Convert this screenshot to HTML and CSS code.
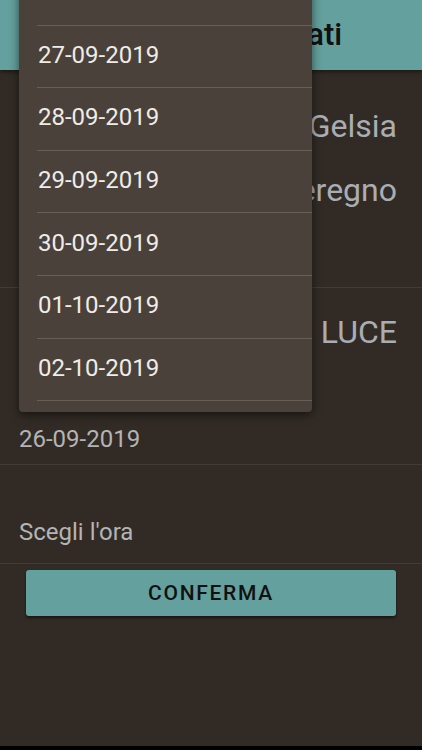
FILE: index.html
```html
<!DOCTYPE html>
<html lang="it">
<head>
    <meta charset="UTF-8">
    <meta name="viewport" content="width=device-width, initial-scale=1.0">
    <title>Riepilogo dati</title>
    <link rel="stylesheet" href="styles.css">
</head>
<body>
    <div class="screen">
        <header class="toolbar">
            <h1>Riepilogo dati</h1>
        </header>

        <!-- Dati della prenotazione -->
        <section class="info">
            <p class="info-value">Sportello Gelsia</p>
            <p class="info-value">Seregno</p>
        </section>
        <section class="service">
            <p class="info-value">Servizio LUCE</p>
        </section>

        <div class="field field-date">26-09-2019</div>
        <div class="field field-time">Scegli l'ora</div>

        <button type="button" class="confirm">CONFERMA</button>

        <!-- Menu a tendina delle date, aperto -->
        <div class="dropdown">
            <ul>
                <li>26-09-2019</li>
                <li>27-09-2019</li>
                <li>28-09-2019</li>
                <li>29-09-2019</li>
                <li>30-09-2019</li>
                <li>01-10-2019</li>
                <li>02-10-2019</li>
                <li>03-10-2019</li>
            </ul>
        </div>
    </div>
</body>
</html>
```

FILE: styles.css
```css
html, body {
    margin: 0;
    padding: 0;
    background-color: #000;
}
body {
    font-family: Roboto, "Noto Sans", sans-serif;
}
.screen {
    position: relative;
    height: 746px;
    overflow: hidden;
    background-color: #322b25;
}
.toolbar {
    height: 70px;
    background-color: #64a09d;
    box-shadow: 0 2px 4px rgba(0, 0, 0, 0.45);
    position: relative;
    z-index: 1;
}
.toolbar h1 {
    margin: 0;
    padding-left: 152px;
    line-height: 70px;
    font-size: 31px;
    font-weight: 500;
    color: #111;
}
.info {
    padding: 24px 25px 65px;
    border-bottom: 1px solid #433b35;
}
.info-value {
    margin: 0;
    text-align: right;
    font-size: 32px;
    line-height: 64px;
    color: #a8aeb4;
}
.service {
    padding: 12px 25px 0;
}
.field {
    padding: 0 19px;
    font-size: 24px;
    line-height: 40px;
    color: #b2b4b5;
    border-bottom: 1px solid #433b35;
}
.field-date {
    padding-top: 55px;
    padding-bottom: 5px;
}
.field-time {
    padding-top: 47px;
    padding-bottom: 11px;
}
.confirm {
    display: block;
    width: 370px;
    height: 46px;
    margin: 6px 26px 0;
    border: none;
    border-radius: 3px;
    background-color: #64a09d;
    box-shadow: 0 2px 3px rgba(0, 0, 0, 0.5);
    font-family: Roboto, "Noto Sans", sans-serif;
    font-size: 21px;
    font-weight: 500;
    letter-spacing: 1.7px;
    color: #111;
}
.dropdown {
    position: absolute;
    top: -37px;
    left: 19px;
    width: 293px;
    height: 449px;
    overflow: hidden;
    border-radius: 4px;
    background-color: #4a413a;
    box-shadow: 0 3px 10px rgba(0, 0, 0, 0.55);
    z-index: 2;
}
.dropdown ul {
    list-style: none;
    margin: 0;
    padding: 0;
}
.dropdown li {
    box-sizing: border-box;
    height: 62.6px;
    margin-left: 18px;
    padding: 0 0 3px 1px;
    display: flex;
    align-items: center;
    border-bottom: 1px solid #665e57;
    font-size: 24px;
    color: #efece8;
}
```
